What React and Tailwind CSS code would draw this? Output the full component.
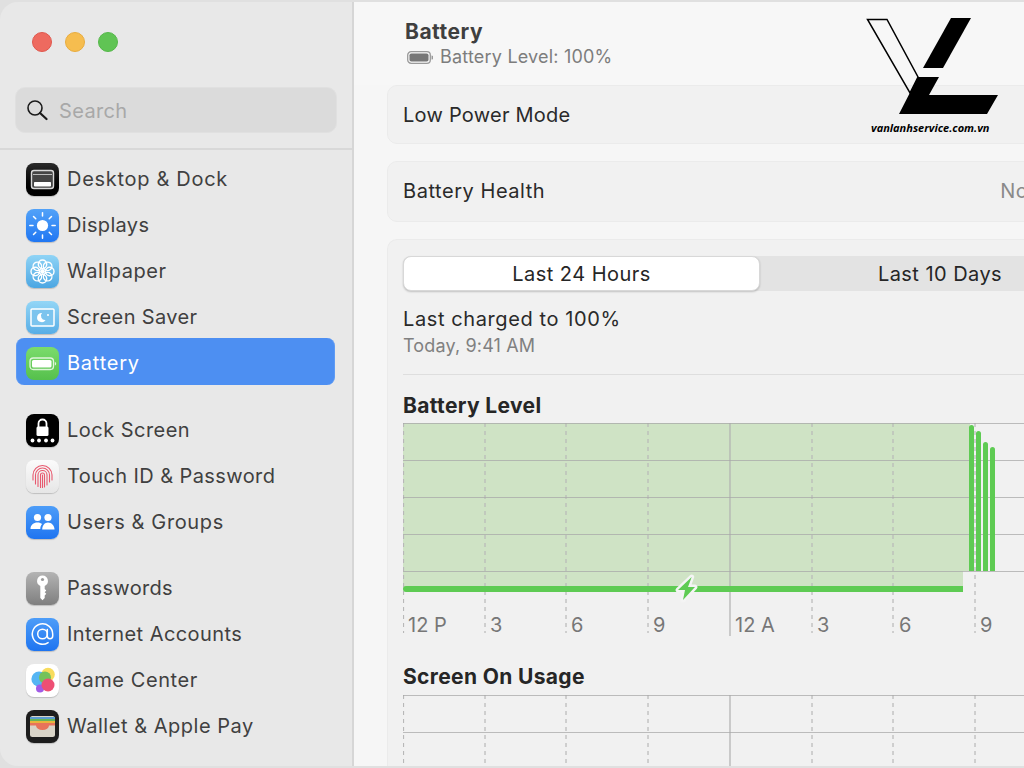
const Tile = ({ className, children }) => (
  <div className={`w-[33px] h-[33px] rounded-[8px] shrink-0 overflow-hidden shadow-[0_1px_1px_rgba(0,0,0,0.18)] ${className}`}>
    <svg width="33" height="33" viewBox="0 0 33 33">{children}</svg>
  </div>
);

const rays = [0, 45, 90, 135, 180, 225, 270, 315];
const petals = [0, 45, 90, 135, 180, 225, 270, 315];

const DesktopIcon = () => (
  <Tile className="bg-gradient-to-b from-[#2a2a2a] to-black">
    <rect x="5.5" y="7.5" width="22" height="18" rx="2.5" fill="#444" stroke="#d8d8d8" strokeWidth="1.4" />
    <rect x="7" y="11" width="19" height="1" fill="#bbb" />
    <rect x="8" y="19" width="17" height="4.5" rx="0.8" fill="#fff" />
  </Tile>
);
const DisplaysIcon = () => (
  <Tile className="bg-gradient-to-b from-[#52a2f8] to-[#1f76f2]">
    <circle cx="16.5" cy="16.5" r="5.6" fill="#fff" />
    {rays.map((a) => (
      <line key={a} x1="16.5" y1="7" x2="16.5" y2="3.8" stroke="#fff" strokeWidth="1.5" strokeLinecap="round" transform={`rotate(${a} 16.5 16.5)`} />
    ))}
  </Tile>
);
const WallpaperIcon = () => (
  <Tile className="bg-gradient-to-b from-[#8fd4f6] to-[#4ba6e2]">
    {petals.map((a) => (
      <circle key={a} cx="16.5" cy="9.2" r="4.2" fill="none" stroke="#fff" strokeWidth="1.4" transform={`rotate(${a} 16.5 16.5)`} />
    ))}
    <circle cx="16.5" cy="16.5" r="2.4" fill="#fff" />
  </Tile>
);
const SaverIcon = () => (
  <Tile className="bg-gradient-to-b from-[#93d6f6] to-[#57ade6]">
    <rect x="5" y="8" width="23" height="17" rx="1" fill="#7cc4ee" stroke="#fff" strokeWidth="1.5" />
    <path d="M16 12 a4.6 4.6 0 1 0 3.6 7 a4.2 4.2 0 0 1 -3.6 -7 Z" fill="#fff" />
    <circle cx="22" cy="14" r="1" fill="#fff" />
  </Tile>
);
const BatteryIcon = () => (
  <Tile className="bg-gradient-to-b from-[#7bdc6c] to-[#55c04c] shadow-none">
    <rect x="4" y="11" width="23.5" height="11.5" rx="3.2" fill="none" stroke="#dff5da" strokeWidth="1.3" />
    <rect x="6" y="13" width="19.5" height="7.5" rx="1.6" fill="#fff" />
    <path d="M28.8 14.8 a2 2 0 0 1 0 3.8 Z" fill="#dff5da" />
  </Tile>
);
const LockIcon = () => (
  <Tile className="bg-black">
    <path d="M12.5 13 V9.5 a4 4 0 0 1 8 0 V13" fill="none" stroke="#fff" strokeWidth="1.8" />
    <rect x="10.5" y="12.5" width="12" height="9.5" rx="1.5" fill="#fff" />
    {[6.5, 13, 20, 26.5].map((x) => (
      <circle key={x} cx={x} cy="26.5" r="1.9" fill="#fff" />
    ))}
  </Tile>
);
const TouchIcon = () => (
  <Tile className="bg-gradient-to-b from-[#fbfbfb] to-[#e6e6e6]">
    <g fill="none" stroke="#e8586e" strokeWidth="1.1" strokeLinecap="round">
      <path d="M7 20 V15 a9.5 9.5 0 0 1 19 0 V20" />
      <path d="M9.5 24 V15 a7 7 0 0 1 14 0 V22" />
      <path d="M12 26.5 V15 a4.5 4.5 0 0 1 9 0 V25" />
      <path d="M14.5 27.5 V15 a2 2 0 0 1 4 0 V27" />
      <path d="M16.5 15 V27.5" />
    </g>
  </Tile>
);
const UsersIcon = () => (
  <Tile className="bg-gradient-to-b from-[#4d9df8] to-[#1e74f0]">
    <circle cx="11.5" cy="11.5" r="3.6" fill="#fff" />
    <circle cx="22" cy="11.5" r="3.6" fill="#fff" />
    <path d="M4.5 23 c0 -4 3 -6.5 7 -6.5 c2 0 3.5 .6 4.6 1.6 c-1.2 1.3 -1.8 3 -1.8 4.9 Z" fill="#fff" />
    <path d="M16.2 23.5 c0 -4.2 2.6 -7 5.8 -7 s6.5 2.8 6.5 7 Z" fill="#fff" />
  </Tile>
);
const KeyIcon = () => (
  <Tile className="bg-gradient-to-b from-[#b4b4b4] to-[#7f7f7f]">
    <path d="M16.5 3.5 a5.5 5.5 0 0 1 2.2 10.5 V17 l1.6 1.6 l-1.6 1.6 l1.6 1.6 l-1.6 1.6 V26 l-2.2 2.2 l-2.2 -2.2 V14 a5.5 5.5 0 0 1 2.2 -10.5 Z" fill="#fff" />
    <circle cx="16.5" cy="7.5" r="1.6" fill="#9c9c9c" />
  </Tile>
);
const AtIcon = () => (
  <Tile className="bg-gradient-to-b from-[#4d9df8] to-[#1e74f0]">
    <circle cx="16.5" cy="16" r="4.8" fill="none" stroke="#fff" strokeWidth="1.5" />
    <path d="M21.3 11.5 V18 a2.7 2.7 0 0 0 5.4 0 V16 a10.2 10.2 0 1 0 -4.6 8.6" fill="none" stroke="#fff" strokeWidth="1.5" strokeLinecap="round" />
  </Tile>
);
const GameIcon = () => (
  <Tile className="bg-white">
    <circle cx="22" cy="10.5" r="6.8" fill="#f8dc5c" />
    <circle cx="13" cy="15" r="7.6" fill="#55b5f3" />
    <circle cx="19" cy="13.5" r="6" fill="#74c25a" />
    <circle cx="14" cy="24.5" r="4" fill="#a15be6" />
    <circle cx="22" cy="21" r="6.5" fill="#ee4f74" />
  </Tile>
);
const WalletIcon = () => (
  <Tile className="bg-[#1d1d1d]">
    <rect x="4" y="6" width="25" height="21" rx="2.5" fill="#d9d4c8" />
    <rect x="4" y="7" width="25" height="2" fill="#5b9bd0" />
    <rect x="4" y="9" width="25" height="2" fill="#66b45a" />
    <rect x="4" y="11" width="25" height="2" fill="#e8b53c" />
    <path d="M4 13 H29 V15.5 H23 a6.5 4.5 0 0 1 -13 0 H4 Z" fill="#e8735a" />
  </Tile>
);

const groups = [
  {
    className: "",
    items: [
      ["Desktop & Dock", DesktopIcon, "tracking-[0.7px]"],
      ["Displays", DisplaysIcon, "tracking-[0.33px]"],
      ["Wallpaper", WallpaperIcon, "tracking-[0.53px]"],
      ["Screen Saver", SaverIcon, "tracking-[0.37px]"],
      ["Battery", BatteryIcon, "tracking-[0.77px]", true],
    ],
  },
  {
    className: "mt-[21px]",
    items: [
      ["Lock Screen", LockIcon, "tracking-[0.47px]"],
      ["Touch ID & Password", TouchIcon, "tracking-[0.41px]"],
      ["Users & Groups", UsersIcon, "tracking-[0.63px]"],
    ],
  },
  {
    className: "mt-[20px]",
    items: [
      ["Passwords", KeyIcon, "tracking-[0.31px]"],
      ["Internet Accounts", AtIcon, "tracking-[0.44px]"],
      ["Game Center", GameIcon, "tracking-[0.56px]"],
      ["Wallet & Apple Pay", WalletIcon, "tracking-[0.53px]"],
    ],
  },
];

const Row = ({ label, Icon, track, active }) => (
  <div className="h-[46px] flex flex-col">
    <div className={`w-[319px] h-[47px] shrink-0 -mt-[2px] pt-[3px] flex items-center gap-[8px] pl-[9px] rounded-[8px] border-x ${active ? "bg-[#4d8ff2] border-[#5f9bf4] text-white" : "border-transparent text-[#404040]"}`}>
      <Icon />
      <span className={`text-[20px] leading-[26px] ${track}`}>{label}</span>
    </div>
  </div>
);

const Sidebar = () => (
  <aside className="w-[354px] shrink-0 bg-[#e8e8e8] border-r-2 border-[#d6d6d6] flex flex-col">
    <div className="flex gap-[13px] pl-[32px] pt-[30px]">
      <div className="w-[20px] h-[20px] rounded-full bg-[#ee6a5f] border border-[#e0574d]" />
      <div className="w-[20px] h-[20px] rounded-full bg-[#f6bd4f] border border-[#e8ac3e]" />
      <div className="w-[20px] h-[20px] rounded-full bg-[#60c454] border border-[#55b84a]" />
    </div>
    <div className="mt-[35px] mx-[15px] h-[46px] w-[322px] rounded-[10px] bg-[#dbdbdb] border border-[#e0e0e0] flex items-center pl-[10px] gap-[11px]">
      <svg width="22" height="22" viewBox="0 0 22 22" fill="none" stroke="#1a1a1a">
        <circle cx="9" cy="9" r="7" strokeWidth="1.6" />
        <path d="M14 14 L20.5 20" strokeWidth="2.2" strokeLinecap="round" />
      </svg>
      <span className="text-[20px] text-[#a8a8a8] tracking-[0.35px] pt-[2px]">Search</span>
    </div>
    <div className="mt-[15px] h-[2px] bg-[#d8d8d8]" />
    <nav className="pt-[6px] pl-[16px] flex flex-col">
      {groups.map((g, i) => (
        <div key={i} className={g.className}>
          {g.items.map(([label, Icon, track, active]) => (
            <Row key={label} label={label} Icon={Icon} track={track} active={active} />
          ))}
        </div>
      ))}
    </nav>
  </aside>
);

const vx = [0.5, 82, 163, 245, 327, 409, 490, 572];
const Grid = ({ hs, bottom }) => (
  <g>
    {vx.map((x) => (
      <line key={x} x1={x} y1="0" x2={x} y2={x === 327 ? bottom + 3 : bottom} stroke={x === 327 ? "#b0b0b0" : "#b8b8b8"} strokeWidth="1.2" strokeDasharray={x === 327 ? undefined : "4 4"} />
    ))}
    {hs.map((y) => (
      <line key={y} x1="0" y1={y} x2="621" y2={y} stroke="#a8a8a8" strokeOpacity="0.75" strokeWidth="1.2" />
    ))}
  </g>
);

const bar = (x, top) => `M${x} 148 V${top + 2.5} a2.5 2.5 0 0 1 5 0 V148 Z`;

const LevelChart = () => (
  <svg width="621" height="241" viewBox="0 0 621 241" className="block mt-[5px]">
    <rect x="0" y="0" width="560" height="166" fill="#cfe3c5" />
    <rect x="560" y="0" width="7" height="148" fill="#cfe3c5" />
    <Grid hs={[0.5, 37.5, 74.5, 111.5, 148.5]} bottom={210} />
    <path d="M3 163 H560 V169 H3 a3 3 0 0 1 0 -6 Z" fill="#5ecb53" />
    <path d={bar(566, 2)} fill="#5ecb53" />
    <path d={bar(573, 8)} fill="#5ecb53" />
    <path d={bar(580, 19)} fill="#5ecb53" />
    <path d={bar(587, 24)} fill="#5ecb53" />
    <path d="M288.7 154 L275 167 H282 L280 177 L292 164 H285 Z" fill="#5ecb53" stroke="#f4f4f4" strokeWidth="5" strokeLinejoin="round" paintOrder="stroke" />
    <g fill="#777777" fontSize="20">
      {[["12 P", 5], ["3", 87], ["6", 168], ["9", 250], ["12 A", 332], ["3", 414], ["6", 496], ["9", 577]].map(([t, x]) => (
        <text key={x} x={x} y="209">{t}</text>
      ))}
    </g>
  </svg>
);

const UsageChart = () => (
  <svg width="621" height="72" viewBox="0 0 621 72" className="block mt-[5px]">
    <Grid hs={[0.5, 37.5]} bottom={72} />
  </svg>
);

const Logo = () => (
  <div className="absolute left-[860px] top-[12px] w-[145px] h-[126px]">
    <svg width="145" height="106" viewBox="0 0 145 106" className="block">
      <path d="M7.5 7.5 H27 L58 65 L50 81 Z" fill="none" stroke="#000" strokeWidth="1.5" />
      <path d="M91 6 H111 L83 56 H63 Z" fill="#000" />
      <path d="M58 65 H79 L69 83 H138 L127 102 H39 Z" fill="#000" />
    </svg>
    <span className="absolute left-[11px] top-[109px] whitespace-nowrap text-[11px] leading-[14px] font-bold italic text-black font-['Open_Sans',sans-serif]">vanlanhservice.com.vn</span>
  </div>
);

const Card = ({ className, children }) => (
  <div className={`w-[760px] rounded-[10px] bg-[#f1f1f1] border border-[#ebebeb] ${className}`}>{children}</div>
);

const Main = () => (
  <main className="flex-1 min-w-0 overflow-hidden bg-[#f7f7f7] flex flex-col">
    <header className="h-[83px] shrink-0 pl-[51px] pt-[18px]">
      <div className="text-[21px] leading-[24px] font-bold text-[#3f3f3f] tracking-[0.5px]">Battery</div>
      <div className="mt-[1px] flex items-center gap-[7px] pl-[2px] text-[18px] leading-[24px] text-[#7d7d7d] tracking-[0.2px]">
        <svg width="26" height="13" viewBox="0 0 26 13">
          <rect x="0.7" y="0.7" width="22.6" height="11.6" rx="3.4" fill="none" stroke="#9a9a9a" strokeWidth="1.3" />
          <rect x="2.5" y="2.5" width="19" height="8" rx="1.8" fill="#777" />
          <path d="M24.5 4.5 a2 2 0 0 1 0 4 Z" fill="#9a9a9a" />
        </svg>
        <span>Battery Level: 100%</span>
      </div>
    </header>
    <div className="flex-1 bg-[#f6f6f6] pl-[33px] flex flex-col">
      <Card className="h-[59px] flex items-center pl-[15px] text-[20px] text-[#2a2a2a] tracking-[0.25px]">Low Power Mode</Card>
      <Card className="h-[61px] mt-[17px] flex items-center justify-between pl-[15px] pr-[74px] pb-[2px] text-[20px] text-[#2a2a2a] tracking-[0.55px]">
        <span>Battery Health</span>
        <span className="text-[#8a8a8a]">Normal</span>
      </Card>
      <Card className="mt-[17px] flex-1 rounded-b-none border-b-0 pt-[16px] pl-[15px]">
        <div className="w-[745px] h-[35px] rounded-[8px] bg-[#e3e3e3] flex text-[20px] text-[#262626] tracking-[0.45px]">
          <div className="w-[357px] rounded-[8px] bg-white border border-[#d8d8d8] shadow-[0_1px_2px_rgba(0,0,0,0.2)] flex items-center justify-center">Last 24 Hours</div>
          <div className="w-[360px] flex items-center justify-center">Last 10 Days</div>
        </div>
        <div className="mt-[15px] text-[20px] leading-[26px] text-[#2a2a2a] tracking-[0.6px]">Last charged to 100%</div>
        <div className="mt-[2px] text-[18px] leading-[24px] text-[#808080] tracking-[0.15px]">Today, 9:41 AM</div>
        <div className="mt-[16px] h-[1px] w-[621px] bg-[#dedede]" />
        <div className="mt-[18px] text-[21px] leading-[26px] font-bold text-[#262626] tracking-[0.35px]">Battery Level</div>
        <div className="-mt-[1px]"><LevelChart /></div>
        <div className="text-[21px] leading-[26px] font-bold text-[#262626] tracking-[0.35px]">Screen On Usage</div>
        <UsageChart />
      </Card>
    </div>
  </main>
);

export default function App() {
  return (
    <div className="relative w-[1024px] h-[768px] overflow-hidden bg-[#e0e0e0] py-[2px] font-['Inter',sans-serif]">
      <div className="flex h-[764px] rounded-l-[18px] overflow-hidden">
        <Sidebar />
        <Main />
      </div>
      <Logo />
    </div>
  );
}
